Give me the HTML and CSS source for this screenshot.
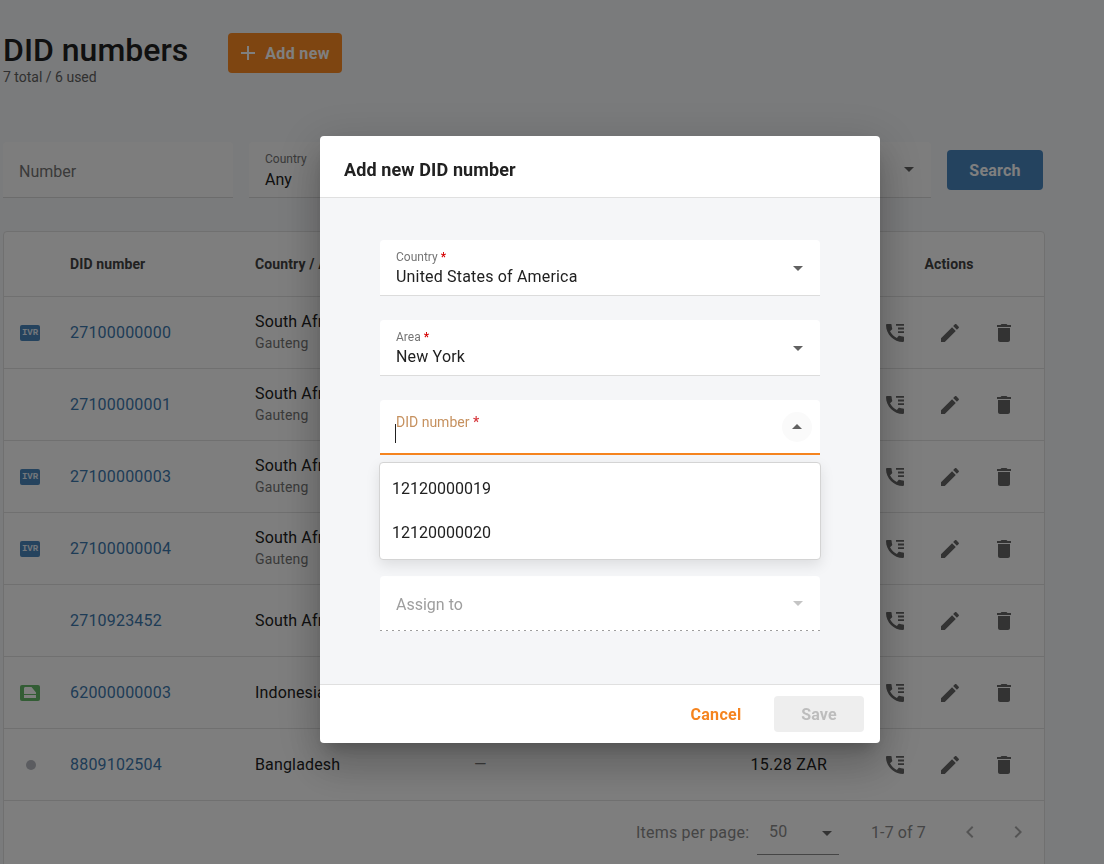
FILE: index.html
```html
<!DOCTYPE html>
<html lang="en">
<head>
  <meta charset="UTF-8" />
  <meta name="viewport" content="width=device-width, initial-scale=1.0" />
  <title>DID numbers</title>
  <link rel="stylesheet" href="styles.css">
</head>
<body>
  <svg class="icon-defs" width="0" height="0">
    <symbol id="i-calls" viewBox="0 0 24 24">
      <path d="M20.01 15.38c-1.23 0-2.42-.2-3.53-.56-.35-.12-.74-.03-1.01.24l-1.57 1.97c-2.83-1.35-5.48-3.9-6.89-6.83l1.95-1.66c.27-.28.35-.67.24-1.02-.37-1.11-.56-2.3-.56-3.53 0-.54-.45-.99-.99-.99H4.19C3.65 3 3 3.24 3 3.99 3 13.28 10.73 21 20.01 21c.71 0 .99-.63.99-1.18v-3.45c0-.54-.45-.99-.99-.99z"/>
      <path d="M13 3h8v1.800h-8zM15 6.600h6v1.800h-6zM15 10.200h6V12h-6z"/>
    </symbol>
    <symbol id="i-edit" viewBox="0 0 24 24">
      <path d="M3 17.250V21h3.750L17.810 9.940l-3.750-3.750L3 17.250zM20.710 7.040c.39-.39.39-1.020 0-1.410l-2.340-2.340c-.39-.39-1.020-.39-1.410 0l-1.830 1.830 3.750 3.750 1.830-1.830z"/>
    </symbol>
    <symbol id="i-delete" viewBox="0 0 24 24">
      <path d="M6 19c0 1.100.9 2 2 2h8c1.100 0 2-.9 2-2V7H6v12zM19 4h-3.500l-1-1h-5l-1 1H5v2h14V4z"/>
    </symbol>
  </svg>

  <main class="page">
    <header class="page-head">
      <div>
        <h1>DID numbers</h1>
        <p class="subtitle">7 total / 6 used</p>
      </div>
      <button class="btn-add">
        <svg width="24" height="24" viewBox="0 0 24 24"><path d="M19 13h-6v6h-2v-6H5v-2h6V5h2v6h6v2z"/></svg>
        Add new
      </button>
    </header>

    <!-- Filters -->
    <section class="filters">
      <div class="filter filter-number"><span class="placeholder">Number</span></div>
      <div class="filter filter-wide">
        <div>
          <span class="filter-label">Country</span>
          <span class="filter-value">Any</span>
        </div>
        <span class="caret"></span>
      </div>
      <button class="btn-search">Search</button>
    </section>

    <!-- Table -->
    <section class="table">
      <div class="row row-head">
        <div></div>
        <div>DID number</div>
        <div>Country / Area</div>
        <div></div>
        <div></div>
        <div class="cell-actions-head">Actions</div>
      </div>

      <div class="row">
        <div class="cell-type"><span class="badge badge-ivr">IVR</span></div>
        <a class="did-link">27100000000</a>
        <div><div>South Africa</div><div class="area">Gauteng</div></div>
        <div></div>
        <div></div>
        <div class="actions">
          <svg><use href="#i-calls"/></svg><svg><use href="#i-edit"/></svg><svg><use href="#i-delete"/></svg>
        </div>
      </div>

      <div class="row">
        <div class="cell-type"></div>
        <a class="did-link">27100000001</a>
        <div><div>South Africa</div><div class="area">Gauteng</div></div>
        <div></div>
        <div></div>
        <div class="actions">
          <svg><use href="#i-calls"/></svg><svg><use href="#i-edit"/></svg><svg><use href="#i-delete"/></svg>
        </div>
      </div>

      <div class="row">
        <div class="cell-type"><span class="badge badge-ivr">IVR</span></div>
        <a class="did-link">27100000003</a>
        <div><div>South Africa</div><div class="area">Gauteng</div></div>
        <div></div>
        <div></div>
        <div class="actions">
          <svg><use href="#i-calls"/></svg><svg><use href="#i-edit"/></svg><svg><use href="#i-delete"/></svg>
        </div>
      </div>

      <div class="row">
        <div class="cell-type"><span class="badge badge-ivr">IVR</span></div>
        <a class="did-link">27100000004</a>
        <div><div>South Africa</div><div class="area">Gauteng</div></div>
        <div></div>
        <div></div>
        <div class="actions">
          <svg><use href="#i-calls"/></svg><svg><use href="#i-edit"/></svg><svg><use href="#i-delete"/></svg>
        </div>
      </div>

      <div class="row">
        <div class="cell-type"></div>
        <a class="did-link">2710923452</a>
        <div>South Africa</div>
        <div></div>
        <div></div>
        <div class="actions">
          <svg><use href="#i-calls"/></svg><svg><use href="#i-edit"/></svg><svg><use href="#i-delete"/></svg>
        </div>
      </div>

      <div class="row">
        <div class="cell-type">
          <span class="badge badge-green">
            <svg width="12" height="11" viewBox="0 0 12 11"><path d="M0 7V1.500C0 .7.6 0 1.400 0H7.500L12 5.500V7zM0 8h12v3H0z"/></svg>
          </span>
        </div>
        <a class="did-link">62000000003</a>
        <div>Indonesia</div>
        <div></div>
        <div></div>
        <div class="actions">
          <svg><use href="#i-calls"/></svg><svg><use href="#i-edit"/></svg><svg><use href="#i-delete"/></svg>
        </div>
      </div>

      <div class="row">
        <div class="cell-type"><span class="dot"></span></div>
        <a class="did-link">8809102504</a>
        <div>Bangladesh</div>
        <div class="dash">—</div>
        <div class="cell-price">15.28 ZAR</div>
        <div class="actions">
          <svg><use href="#i-calls"/></svg><svg><use href="#i-edit"/></svg><svg><use href="#i-delete"/></svg>
        </div>
      </div>

      <div class="paginator">
        <span class="per-page">Items per page:</span>
        <div class="page-size"><span>50</span><span class="caret"></span></div>
        <span class="range">1-7 of 7</span>
        <svg class="pager-btn" viewBox="0 0 24 24"><path d="M15.410 7.410 14 6l-6 6 6 6 1.410-1.410L10.830 12z"/></svg>
        <svg class="pager-btn" viewBox="0 0 24 24"><path d="M10 6 8.590 7.410 13.170 12l-4.580 4.590L10 18l6-6z"/></svg>
      </div>
    </section>
  </main>

  <!-- Add new dialog -->
  <div class="overlay">
    <div class="dialog">
      <h2 class="dialog-title">Add new DID number</h2>
      <div class="dialog-body">
        <div class="field">
          <div>
            <span class="field-label">Country <b>*</b></span>
            <span class="field-value">United States of America</span>
          </div>
          <span class="caret"></span>
        </div>
        <div class="field">
          <div>
            <span class="field-label">Area <b>*</b></span>
            <span class="field-value">New York</span>
          </div>
          <span class="caret"></span>
        </div>
        <div class="field field-focus">
          <div>
            <span class="field-label">DID number <b>*</b></span>
            <span class="cursor"></span>
          </div>
          <span class="caret-round"><span class="caret caret-up"></span></span>
          <ul class="options">
            <li>12120000019</li>
            <li>12120000020</li>
          </ul>
        </div>
        <div class="field field-disabled">
          <span>Assign to</span>
          <span class="caret"></span>
        </div>
      </div>
      <div class="dialog-foot">
        <button class="btn-cancel">Cancel</button>
        <button class="btn-save">Save</button>
      </div>
    </div>
  </div>
</body>
</html>
```

FILE: styles.css
```css
* {
  box-sizing: border-box;
}
html, body {
  height: 100%;
}
body {
  margin: 0;
  font-family: Roboto, sans-serif;
  font-size: 16px;
  color: #212121;
  background: #f5f6f8;
  overflow: hidden;
}
button {
  font-family: inherit;
  border: none;
}
.icon-defs {
  position: absolute;
}
.page {
  width: 1045px;
  height: 864px;
  overflow: hidden;
  padding: 33px 0 0 3px;
}
.page-head {
  display: flex;
  align-items: flex-start;
  gap: 40px;
  height: 109px;
}
h1 {
  margin: 0;
  font-size: 32px;
  font-weight: 500;
  line-height: 34px;
}
.subtitle {
  margin: 0;
  font-size: 14px;
  line-height: 20px;
  color: #616161;
}
.btn-add {
  display: flex;
  align-items: center;
  gap: 5px;
  width: 114px;
  height: 40px;
  padding: 0 0 0 8px;
  border-radius: 4px;
  background: #fc8a22;
  color: #fff;
  font-size: 16px;
  font-weight: 700;
  letter-spacing: .35px;
}
.btn-add svg {
  fill: #fff;
}
.filters {
  display: flex;
  align-items: center;
  gap: 16px;
  height: 56px;
}
.filter {
  height: 56px;
  padding: 0 16px;
  background: #fbfbfb;
  border-bottom: 1px solid #d9d9d9;
  border-radius: 4px 4px 0 0;
  display: flex;
  align-items: center;
  justify-content: space-between;
}
.filter-number {
  width: 230px;
  padding-top: 3px;
}
.filter-wide {
  width: 682px;
  padding-right: 17px;
  padding-top: 2px;
}
.filter-wide .caret {
  margin-top: -2px;
}
.placeholder {
  color: #757575;
}
.filter-label {
  display: block;
  font-size: 12px;
  line-height: 14px;
  color: #757575;
}
.filter-value {
  display: block;
  margin-top: 4px;
  line-height: 20px;
}
.caret {
  display: inline-block;
  flex: none;
  width: 0;
  height: 0;
  border-left: 5px solid transparent;
  border-right: 5px solid transparent;
  border-top: 5px solid #616161;
}
.btn-search {
  width: 96px;
  height: 40px;
  padding-top: 2px;
  border-radius: 4px;
  background: #4886be;
  color: #fff;
  font-size: 16px;
  font-weight: 700;
  letter-spacing: .2px;
}

.table {
  margin-top: 33px;
  height: 700px;
  background: #fdfdfd;
  border: 1px solid #e0e0e0;
  border-radius: 4px;
}
.row {
  display: grid;
  grid-template-columns: 66px 185px 219px 185px 168px 217px;
  align-items: center;
  height: 72px;
  line-height: 22px;
  letter-spacing: .15px;
  border-bottom: 1px solid #e0e0e0;
}
.row-head {
  height: 65px;
  padding-bottom: 1px;
  font-size: 14px;
  font-weight: 700;
  letter-spacing: .12px;
  color: #424242;
}
.cell-type {
  display: flex;
  justify-content: center;
  width: 20px;
  margin-left: 16px;
}
.did-link {
  color: #3c78ad;
  letter-spacing: .2px;
}
.area {
  font-size: 14px;
  line-height: 20px;
  margin-bottom: 2px;
  color: #757575;
}
.dash {
  color: #757575;
}
.cell-price {
  text-align: right;
  letter-spacing: .25px;
}
.cell-actions-head {
  text-align: center;
  padding-left: 27px;
}
.actions {
  display: flex;
  gap: 31px;
  padding-left: 56px;
}
.actions svg {
  width: 24px;
  height: 24px;
  fill: #666;
}
.actions svg:last-child {
  margin-left: -1px;
}
.badge {
  flex: none;
  width: 20px;
  height: 16px;
  border-radius: 2px;
  display: flex;
  align-items: center;
  justify-content: center;
}
.badge-ivr {
  background: #4a86bd;
  color: #e6eef6;
  font-family: "Liberation Mono", monospace;
  font-size: 9px;
  font-weight: 700;
  letter-spacing: 0;
}
.badge-green {
  background: #66bb6a;
}
.badge-green svg {
  fill: #fff;
}
.dot {
  width: 10px;
  height: 10px;
  margin-left: 1px;
  border-radius: 50%;
  background: #b6b9c0;
}
.paginator {
  display: flex;
  align-items: center;
  height: 62px;
  padding-left: 632px;
  font-size: 16px;
  letter-spacing: .2px;
  color: #8a8a8a;
  white-space: nowrap;
}
.per-page {
  flex: none;
  width: 113px;
}
.page-size {
  flex: none;
  display: flex;
  align-items: center;
  justify-content: space-between;
  width: 82px;
  height: 46px;
  margin: 0 32px 0 8px;
  padding: 0 7px 0 12px;
  border-bottom: 1px solid #8a8a8a;
}
.page-size .caret {
  margin-top: 3px;
  border-top-color: #666;
}
.range {
  flex: none;
  width: 87px;
  letter-spacing: .12px;
}
.pager-btn {
  flex: none;
  width: 24px;
  height: 24px;
  fill: #a8a8a8;
  margin-right: 24px;
}
.pager-btn:last-child {
  margin-right: 0;
}

.overlay {
  position: fixed;
  top: 0;
  right: 0;
  bottom: 0;
  left: 0;
  background: rgba(0, 0, 0, .5);
  padding: 136px 0 0 320px;
}
.dialog {
  width: 560px;
  height: 607px;
  border-radius: 4px;
  background: #fff;
  overflow: hidden;
  box-shadow: 0 11px 15px -7px rgba(0, 0, 0, .2), 0 24px 38px 3px rgba(0, 0, 0, .14), 0 9px 46px 8px rgba(0, 0, 0, .12);
  display: flex;
  flex-direction: column;
}
.dialog-title {
  margin: 0;
  height: 62px;
  padding: 0 24px;
  font-size: 18px;
  font-weight: 700;
  line-height: 67px;
  letter-spacing: .12px;
  border-bottom: 1px solid #e0e0e0;
}
.dialog-body {
  flex: 1;
  background: #f5f6f8;
  padding: 42px 60px 0;
}
.field {
  position: relative;
  height: 56px;
  margin-bottom: 24px;
  padding: 2px 16px 0;
  background: #fff;
  border-bottom: 1px solid #dcdcdc;
  border-radius: 4px 4px 0 0;
  display: flex;
  align-items: center;
  justify-content: space-between;
}
.field-label {
  display: block;
  font-size: 12px;
  line-height: 14px;
  color: #757575;
}
.field-label b {
  color: #d50000;
  font-weight: 500;
}
.field-value {
  display: block;
  margin-top: 2px;
  line-height: 22px;
  letter-spacing: .18px;
}
.field .caret {
  margin: 0 1px 0 0;
}
.field-focus {
  height: 55px;
  padding-top: 0;
  border-bottom: 2px solid #f5841f;
}
.field-focus .field-label {
  font-size: 14px;
  line-height: 16px;
  color: #c6915f;
  margin-top: 4px;
}
.field-focus .field-label b {
  color: #d6353a;
}
.cursor {
  display: block;
  width: 1px;
  height: 19px;
  margin: -6px 0 0 -1px;
  background: #212121;
}
.caret-round {
  width: 30px;
  height: 30px;
  margin-right: -8px;
  border-radius: 50%;
  background: #fafafa;
  display: flex;
  align-items: center;
  justify-content: center;
}
.field .caret-up {
  margin: 0;
  border-top: none;
  border-bottom: 5px solid #616161;
}
.options {
  position: absolute;
  top: 62px;
  left: -1px;
  right: -1px;
  margin: 0;
  padding: 4px 12px;
  list-style: none;
  background: #fff;
  border: 1px solid #d4d4d4;
  border-radius: 4px;
  box-shadow: 0 5px 14px rgba(0, 0, 0, .1);
  z-index: 2;
}
.options li {
  height: 44px;
  line-height: 44px;
}
.field-disabled {
  height: 55px;
  margin: 121px 0 0;
  color: #9e9e9e;
  border-bottom: none;
  background:
    linear-gradient(to right, #9e9e9e 33%, transparent 0%) 0 100% / 6px 1px repeat-x,
    #fff;
}
.field-disabled .caret {
  margin-top: -2px;
  border-top-color: #c4c4c4;
}
.dialog-foot {
  height: 59px;
  border-top: 1px solid #e0e0e0;
  display: flex;
  align-items: center;
  justify-content: flex-end;
  gap: 16px;
  padding: 0 16px 0 0;
}
.btn-cancel {
  width: 84px;
  height: 36px;
  background: none;
  color: #f5841f;
  font-size: 16px;
  font-weight: 700;
  letter-spacing: .3px;
}
.btn-save {
  width: 90px;
  height: 36px;
  border-radius: 4px;
  background: #eee;
  color: #bdbdbd;
  font-size: 16px;
  font-weight: 700;
  letter-spacing: .2px;
}
```
